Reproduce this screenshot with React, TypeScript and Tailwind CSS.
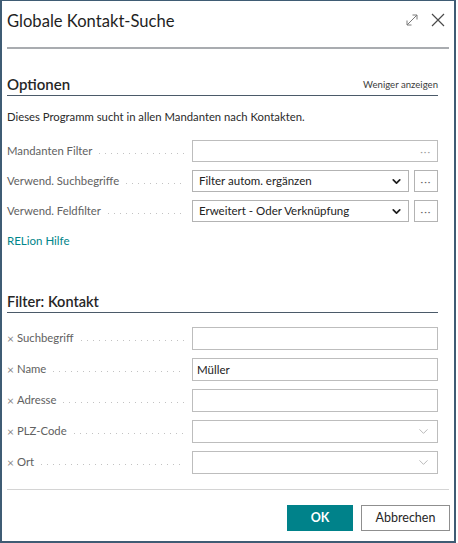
import { ChevronDown } from 'lucide-react'

const FONT = { fontFamily: 'Lato, "Open Sans", sans-serif' }

// dotted leader between a field caption and its control
function Leader() {
  return (
    <div className="flex-1 h-px mx-[7px] mt-[4px] bg-[linear-gradient(to_right,#c2c2c2_1px,transparent_1px)] bg-[length:6px_1px] bg-repeat-x" />
  )
}

function Caption({ text, clearable }: { text: string; clearable?: boolean }) {
  return (
    <div className="flex items-center w-[185px] shrink-0 text-[11.3px] text-[#616161]">
      {clearable && <span className="text-[12px] text-[#8a8a8a] mr-[3px] leading-none">×</span>}
      <span className="whitespace-nowrap">{text}</span>
      <Leader />
    </div>
  )
}

function Dots({ light }: { light?: boolean }) {
  return (
    <span className={`tracking-[1px] text-[10px] leading-none ${light ? 'text-[#a0a0a0]' : 'text-[#666]'}`}>···</span>
  )
}

const OPTION_ROWS = [
  { label: 'Verwend. Suchbegriffe', value: 'Filter autom. ergänzen' },
  { label: 'Verwend. Feldfilter', value: 'Erweitert - Oder Verknüpfung' },
]

const FILTER_ROWS = [
  { label: 'Suchbegriff', value: '', lookup: false },
  { label: 'Name', value: 'Müller', lookup: false },
  { label: 'Adresse', value: '', lookup: false },
  { label: 'PLZ-Code', value: '', lookup: true },
  { label: 'Ort', value: '', lookup: true },
]

export default function App() {
  return (
    <div className="w-[458px] h-[543px] bg-white" style={FONT}>
      <div className="w-[456px] h-[543px] border-x-2 border-b-2 border-t border-[#3f5c74] flex flex-col">
        {/* title bar */}
        <div className="h-[46px] flex items-start justify-between pl-[5px] pr-[9px] pt-[8px]">
          <h1 className="text-[16.6px] leading-[24px] text-[#1f1f1f]">Globale Kontakt-Suche</h1>
          <div className="flex items-center gap-[12px] mt-[4px]">
            <svg width="14" height="14" viewBox="0 0 14 14" fill="none" stroke="#7a7a7a" strokeWidth="1">
              <path d="M2 12 L12 2 M7.5 2 H12 V6.5 M2 7.5 V12 H6.5" />
            </svg>
            <svg width="14" height="14" viewBox="0 0 14 14" fill="none" stroke="#4a4a4a" strokeWidth="1.2">
              <path d="M1 1 L13 13 M13 1 L1 13" />
            </svg>
          </div>
        </div>
        <div className="ml-[5px] w-[442px] h-[2px] bg-[#a9acb0]" />

        {/* Optionen */}
        <div className="ml-[5px] w-[431px] mt-[25px] h-[22px] flex items-start justify-between border-b border-[#4b5a69]">
          <span className="text-[15px] leading-[20px] font-semibold text-[#262626]">Optionen</span>
          <span className="text-[9.6px] leading-[20px] text-[#3d3d3d] mt-[1px]">Weniger anzeigen</span>
        </div>
        <p className="ml-[5px] mt-[13px] text-[11.3px] leading-[16px] text-[#2b2b2b]">
          Dieses Programm sucht in allen Mandanten nach Kontakten.
        </p>

        <div className="ml-[5px] mt-[15px] flex flex-col gap-[8px]">
          <div className="flex items-center h-[22px]">
            <Caption text="Mandanten Filter" />
            <div className="w-[246px] h-[22px] border border-[#bdbdbd] flex items-center justify-end pr-[6px]">
              <Dots light />
            </div>
          </div>
          {OPTION_ROWS.map((row) => (
            <div key={row.label} className="flex items-center h-[22px]">
              <Caption text={row.label} />
              <div className="w-[217px] h-[22px] border border-[#b3b3b3] flex items-center justify-between pl-[6px] pr-[5px]">
                <span className="text-[11.5px] text-[#222]">{row.value}</span>
                <ChevronDown size={13} strokeWidth={3.2} color="#1f1f1f" />
              </div>
              <div className="ml-[5px] w-[24px] h-[22px] border border-[#b3b3b3] flex items-center justify-center">
                <Dots />
              </div>
            </div>
          ))}
        </div>

        <a className="ml-[5px] mt-[11px] text-[11.5px] leading-[16px] text-[#00858a]">RELion Hilfe</a>

        {/* Filter: Kontakt */}
        <div className="ml-[5px] w-[431px] mt-[40px] h-[24px] border-b border-[#4b5a69]">
          <span className="text-[14.5px] leading-[20px] font-semibold text-[#262626]">Filter: Kontakt</span>
        </div>

        <div className="ml-[5px] mt-[14px] flex flex-col gap-[8px]">
          {FILTER_ROWS.map((row) => (
            <div key={row.label} className="flex items-center h-[23px]">
              <Caption text={row.label} clearable />
              <div className="w-[246px] h-[23px] border border-[#bdbdbd] flex items-center justify-between pl-[4px] pr-[6px]">
                <span className="text-[11.5px] text-[#222]">{row.value}</span>
                {row.lookup && <ChevronDown size={15} strokeWidth={1.1} color="#9a9a9a" />}
              </div>
            </div>
          ))}
        </div>

        <div className="ml-[5px] w-[442px] mt-[15px] h-px bg-[#d4d4d4]" />

        {/* action buttons */}
        <div className="mt-[15px] flex justify-end gap-[8px] pr-[4px]">
          <button className="w-[66px] h-[26px] bg-[#00828a] text-white text-[12.5px] font-bold">OK</button>
          <button className="w-[89px] h-[26px] bg-white border border-[#8f8f8f] text-[#262626] text-[12.5px]">Abbrechen</button>
        </div>
      </div>
    </div>
  )
}
